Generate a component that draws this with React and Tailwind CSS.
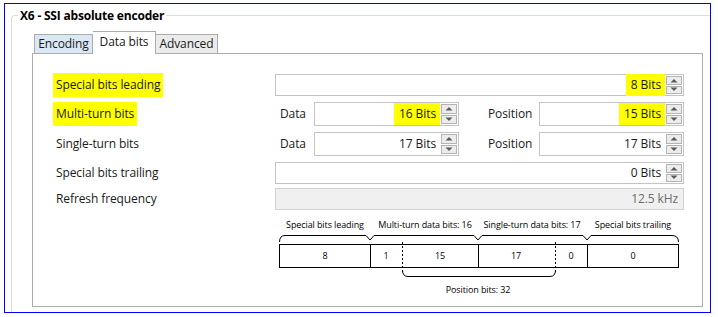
import React from "react";

const FONT = { fontFamily: '"Open Sans", "Noto Sans", sans-serif' };

function Arrow({ up }) {
  return (
    <svg width="8" height="5" viewBox="0 0 8 5" className="block">
      {up ? (
        <polygon points="0.5,4.5 4,1 7.5,4.5" fill="#5a5a5a" />
      ) : (
        <polygon points="0.5,0.5 4,4 7.5,0.5" fill="#5a5a5a" />
      )}
    </svg>
  );
}

function Spinner() {
  return (
    <div className="self-stretch flex flex-col gap-[1px] py-[1px] pr-[1px]">
      <div className="flex-1 w-[16px] border border-[#b4b4b4] bg-[#ececec] flex items-center justify-center">
        <Arrow up />
      </div>
      <div className="flex-1 w-[16px] border border-[#b4b4b4] bg-[#ececec] flex items-center justify-center">
        <Arrow />
      </div>
    </div>
  );
}

function Field({ value, hl, className = "" }) {
  return (
    <div
      className={
        "h-full border border-[#c4c4c4] bg-white flex items-center justify-end " +
        className
      }
    >
      <span
        className={
          "pr-[4px] leading-none " +
          (hl ? "bg-[#ffff00] pl-[5px] py-[5px] mr-[1px]" : "mr-[1px]")
        }
      >
        {value}
      </span>
      <Spinner />
    </div>
  );
}

function Label({ children, hl }) {
  return (
    <div className="flex items-center h-full">
      {hl ? (
        <span className="bg-[#ffff00] -ml-[3px] px-[3px] py-[6px] leading-none">
          {children}
        </span>
      ) : (
        <span className="leading-none">{children}</span>
      )}
    </div>
  );
}

function Diagram() {
  const ox = 270;
  const oy = 212;
  const X = (x) => x - ox;
  const Y = (y) => y - oy;
  const txt = {
    fontFamily: '"Open Sans", "Noto Sans", sans-serif',
    fontSize: 9,
    fill: "#000",
  };
  return (
    <svg width="420" height="90" viewBox="0 0 420 90" className="block">
      <g style={txt} textAnchor="middle">
        <text x={X(325)} y={Y(228)}>Special bits leading</text>
        <text x={X(425)} y={Y(228)}>Multi-turn data bits: 16</text>
        <text x={X(532)} y={Y(228)}>Single-turn data bits: 17</text>
        <text x={X(633)} y={Y(228)}>Special bits trailing</text>
      </g>
      <g fill="none" stroke="#000" strokeWidth="1">
        <path d={`M${X(279.5)},${Y(242)} Q${X(279.5)},${Y(235.5)} ${X(285)},${Y(235.5)} L${X(366)},${Y(235.5)} L${X(370)},${Y(240)} L${X(374)},${Y(235.5)} L${X(474)},${Y(235.5)} L${X(478)},${Y(240)} L${X(482)},${Y(235.5)} L${X(583)},${Y(235.5)} L${X(587)},${Y(240)} L${X(591)},${Y(235.5)} L${X(672)},${Y(235.5)} Q${X(678.5)},${Y(235.5)} ${X(678.5)},${Y(242)}`} />
        <rect x={X(279.5)} y={Y(244.5)} width={399} height={23} />
        <line x1={X(370.5)} y1={Y(244.5)} x2={X(370.5)} y2={Y(267.5)} />
        <line x1={X(478.5)} y1={Y(244.5)} x2={X(478.5)} y2={Y(267.5)} />
        <line x1={X(587.5)} y1={Y(244.5)} x2={X(587.5)} y2={Y(267.5)} />
        <line x1={X(402.5)} y1={Y(242)} x2={X(402.5)} y2={Y(272)} strokeDasharray="2 2" />
        <line x1={X(555.5)} y1={Y(242)} x2={X(555.5)} y2={Y(272)} strokeDasharray="2 2" />
        <path d={`M${X(402.5)},${Y(270)} Q${X(402.5)},${Y(276.5)} ${X(408)},${Y(276.5)} L${X(550)},${Y(276.5)} Q${X(555.5)},${Y(276.5)} ${X(555.5)},${Y(270)}`} />
      </g>
      <g style={txt} textAnchor="middle">
        <text x={X(325)} y={Y(259)}>8</text>
        <text x={X(386)} y={Y(259)}>1</text>
        <text x={X(440)} y={Y(259)}>15</text>
        <text x={X(516)} y={Y(259)}>17</text>
        <text x={X(571)} y={Y(259)}>0</text>
        <text x={X(633)} y={Y(259)}>0</text>
        <text x={X(478)} y={Y(293)}>Position bits: 32</text>
      </g>
    </svg>
  );
}

export default function App() {
  return (
    <div className="w-[718px] h-[317px] bg-white text-[12px] tracking-[-0.1px] text-[#1a1a1a] overflow-hidden" style={FONT}>
      <div className="ml-[4px] mt-[3px] w-[707px] h-[310px] border border-[#0000ff] flex flex-col">
        <div className="relative ml-[6px] mt-[11px] flex-1 border-l border-t border-[#d5dfe5] rounded-tl-[4px]">
          <div className="absolute left-[6px] -top-[8px] bg-white px-[2px] font-bold leading-[16px] text-[12px] tracking-[-0.2px] text-black">
            X6 - SSI absolute encoder
          </div>
          <div className="ml-[20px] mr-[7px] mt-[15px]">
            <div className="flex items-end h-[22px] pl-[2px]">
              <div className="w-[59px] h-[19px] border border-b-0 border-[#acacac] bg-[#dae7f4] flex items-center justify-center leading-none">
                Encoding
              </div>
              <div className="relative z-10 w-[63px] h-[23px] -mb-px border border-l-0 border-b-0 border-[#acacac] bg-white flex items-center justify-center leading-none pb-[2px]">
                Data bits
              </div>
              <div className="w-[62px] h-[19px] border border-l-0 border-b-0 border-[#acacac] bg-[#ebebeb] flex items-center justify-center leading-none">
                Advanced
              </div>
            </div>
            <div className="h-[254px] border border-[#acacac] bg-white pl-[23px] pt-[20px]">
              <div className="grid grid-cols-[219px_409px]">
                <div className="h-[22px]"><Label hl>Special bits leading</Label></div>
                <div className="h-[22px]"><Field value="8 Bits" hl /></div>

                <div className="h-[24px] mt-[6px]"><Label hl>Multi-turn bits</Label></div>
                <div className="h-[24px] mt-[6px] grid grid-cols-[39px_145px_80px_145px]">
                  <div className="flex items-center pl-[5px]">Data</div>
                  <Field value="16 Bits" hl />
                  <div className="flex items-center pl-[29px]">Position</div>
                  <Field value="15 Bits" hl />
                </div>

                <div className="h-[24px] mt-[6px]"><Label>Single-turn bits</Label></div>
                <div className="h-[24px] mt-[6px] grid grid-cols-[39px_145px_80px_145px]">
                  <div className="flex items-center pl-[5px]">Data</div>
                  <Field value="17 Bits" />
                  <div className="flex items-center pl-[29px]">Position</div>
                  <Field value="17 Bits" />
                </div>

                <div className="h-[22px] mt-[6px]"><Label>Special bits trailing</Label></div>
                <div className="h-[22px] mt-[6px]"><Field value="0 Bits" /></div>

                <div className="h-[22px] mt-[4px]"><Label>Refresh frequency</Label></div>
                <div className="h-[22px] mt-[4px] border border-[#d2d2d2] bg-[#f0f0f0] flex items-center justify-end pr-[5px] text-[#6d6d6d]">
                  12.5 kHz
                </div>
              </div>
              <div className="mt-[2px] ml-[214px]">
                <Diagram />
              </div>
            </div>
          </div>
        </div>
      </div>
    </div>
  );
}
